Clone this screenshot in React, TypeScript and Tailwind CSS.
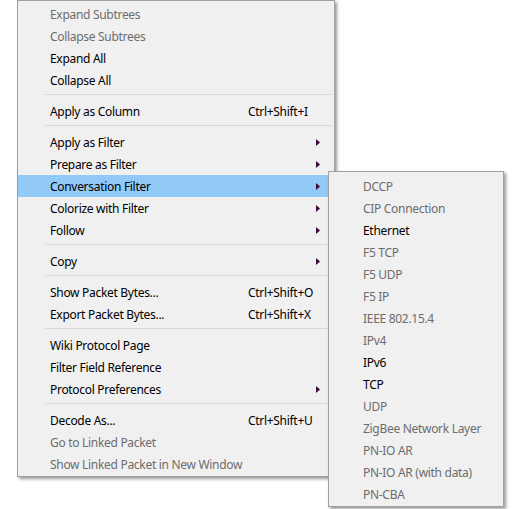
import React from 'react'

type Item =
  | { sep: true }
  | { label: string; shortcut?: string; sub?: boolean; disabled?: boolean; active?: boolean; sep?: false }

const mainItems: Item[] = [
  { label: 'Expand Subtrees', disabled: true },
  { label: 'Collapse Subtrees', disabled: true },
  { label: 'Expand All' },
  { label: 'Collapse All' },
  { sep: true },
  { label: 'Apply as Column', shortcut: 'Ctrl+Shift+I' },
  { sep: true },
  { label: 'Apply as Filter', sub: true },
  { label: 'Prepare as Filter', sub: true },
  { label: 'Conversation Filter', sub: true, active: true },
  { label: 'Colorize with Filter', sub: true },
  { label: 'Follow', sub: true },
  { sep: true },
  { label: 'Copy', sub: true },
  { sep: true },
  { label: 'Show Packet Bytes...', shortcut: 'Ctrl+Shift+O' },
  { label: 'Export Packet Bytes...', shortcut: 'Ctrl+Shift+X' },
  { sep: true },
  { label: 'Wiki Protocol Page' },
  { label: 'Filter Field Reference' },
  { label: 'Protocol Preferences', sub: true },
  { sep: true },
  { label: 'Decode As...', shortcut: 'Ctrl+Shift+U' },
  { label: 'Go to Linked Packet', disabled: true },
  { label: 'Show Linked Packet in New Window', disabled: true },
]

const subItems: [string, boolean][] = [
  ['DCCP', false],
  ['CIP Connection', false],
  ['Ethernet', true],
  ['F5 TCP', false],
  ['F5 UDP', false],
  ['F5 IP', false],
  ['IEEE 802.15.4', false],
  ['IPv4', false],
  ['IPv6', true],
  ['TCP', true],
  ['UDP', false],
  ['ZigBee Network Layer', false],
  ['PN-IO AR', false],
  ['PN-IO AR (with data)', false],
  ['PN-CBA', false],
]

function Arrow() {
  return (
    <svg width="4" height="7" viewBox="0 0 4 7" className="block">
      <path d="M0 0 L4 3.5 L0 7 Z" fill="#3a0b38" />
    </svg>
  )
}

export default function App() {
  return (
    <div
      className="relative w-[525px] h-[509px] bg-white overflow-hidden text-[12px] leading-none tracking-[-0.3px]"
      style={{ fontFamily: '"Noto Sans", "Open Sans", sans-serif' }}
    >
      <div className="ml-[17px] w-[318px] bg-[#f0f0f0] border border-[#a0a0a0] pt-[2px] pb-[1px] shadow-[2px_2px_3px_rgba(0,0,0,0.4)]">
        {mainItems.map((it, i) =>
          it.sep ? (
            <div key={i} className="h-[9px] pt-[3px]">
              <div className="ml-[27px] mr-[2px] h-px bg-[#d7d7d7]" />
            </div>
          ) : (
            <div
              key={i}
              className={`grid grid-cols-[230px_68px_4px_1fr] items-center h-[22px] pt-[2px] ${it.active ? 'bg-[#91c9f7]' : ''} ${it.disabled ? 'text-[#6d6d6d]' : 'text-black'}`}
            >
              <span className="pl-[32px] whitespace-nowrap">{it.label}</span>
              <span className="whitespace-nowrap">{it.shortcut}</span>
              <span className="-mt-[2px]">{it.sub && <Arrow />}</span>
              <span />
            </div>
          )
        )}
      </div>

      <div className="absolute left-[328px] top-[171px] w-[176px] bg-[#f0f0f0] border border-[#a0a0a0] pt-[3px] pb-[1px] shadow-[2px_2px_3px_rgba(0,0,0,0.4)]">
        {subItems.map(([label, enabled]) => (
          <div
            key={label}
            className={`flex items-center h-[22px] pt-[2px] pl-[34px] whitespace-nowrap ${enabled ? 'text-black' : 'text-[#6d6d6d]'}`}
          >
            {label}
          </div>
        ))}
      </div>
    </div>
  )
}
